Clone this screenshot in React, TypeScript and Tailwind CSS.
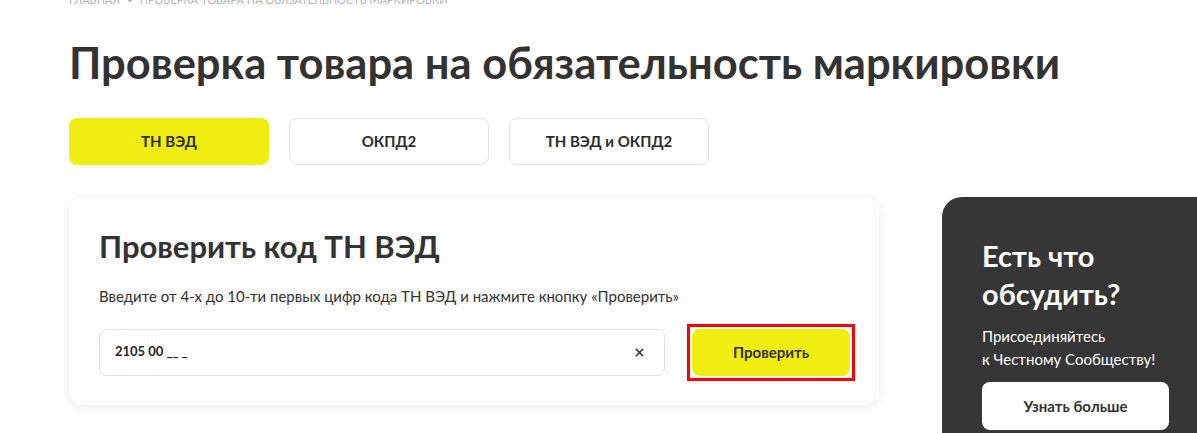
import { X } from 'lucide-react';

const font = { fontFamily: 'Lato, "Noto Sans", sans-serif' };

function Tab({ label, active }: { label: string; active?: boolean }) {
  return (
    <button
      className={`w-[200px] h-[47px] rounded-lg text-[15px] font-bold text-[#2b2b2b] ${
        active ? 'bg-[#f0ee10]' : 'bg-white border border-[#e2e2e2]'
      }`}
    >
      {label}
    </button>
  );
}

export default function App() {
  return (
    <div className="w-[1197px] h-[433px] overflow-hidden bg-white text-[#333]" style={font}>
      <div className="pl-[69px]">
        {/* Breadcrumbs */}
        <div className="-mt-[7px] h-[14px] flex items-center gap-2 text-[11px] uppercase text-[#b4b4b4]">
          <span>Главная</span>
          <span className="w-[4px] h-[4px] rounded-full bg-[#b4b4b4]"></span>
          <span>Проверка товара на обязательность маркировки</span>
        </div>

        <h1 className="mt-[27px] text-[43.5px] leading-[56px] font-bold text-[#333]">
          Проверка товара на обязательность маркировки
        </h1>

        {/* Tabs */}
        <div className="mt-[28px] flex gap-[20px]">
          <Tab label="ТН ВЭД" active />
          <Tab label="ОКПД2" />
          <Tab label="ТН ВЭД и ОКПД2" />
        </div>

        <div className="mt-[32px] flex items-start">
          {/* Check card */}
          <div className="w-[810px] mt-[1px] rounded-xl bg-[#fcfcfc] shadow-[0_2px_12px_rgba(0,0,0,0.08)] pl-[30px] pr-[24px] pt-[28px] pb-[24px]">
            <h2 className="text-[31px] leading-[40px] font-bold text-[#333]">Проверить код ТН ВЭД</h2>
            <p className="mt-[19px] text-[15px] text-[#333]">
              Введите от 4-х до 10-ти первых цифр кода ТН ВЭД и нажмите кнопку «Проверить»
            </p>
            <div className="mt-[16px] flex items-center">
              <div className="w-[566px] shrink-0 h-[47px] rounded-lg border border-[#e2e2e2] bg-white flex items-center justify-between pl-[15px] pr-[18px]">
                <span className="text-[13px] font-bold text-[#222]">2105 00 __ _</span>
                <X size={13} strokeWidth={3} className="text-[#333]" />
              </div>
              <div className="ml-[22px] p-[2px] border-[3px] border-[#ff0000]">
                <button className="w-[158px] h-[47px] rounded-lg bg-[#f0ee10] text-[15px] font-bold text-[#333]">
                  Проверить
                </button>
              </div>
            </div>
          </div>

          {/* Side panel */}
          <div className="ml-[63px] w-[270px] h-[240px] rounded-tl-[20px] bg-[#363636] pl-[40px] pt-[40px] text-white">
            <h3 className="text-[29px] leading-[38px] font-bold">
              Есть что
              <br />
              обсудить?
            </h3>
            <p className="mt-[12px] text-[15px] leading-[23px]">
              Присоединяйтесь
              <br />к Честному Сообществу!
            </p>
            <button className="mt-[11px] w-[187px] h-[48px] rounded-lg bg-white text-[15px] font-bold text-[#333]">
              Узнать больше
            </button>
          </div>
        </div>
      </div>
    </div>
  );
}
